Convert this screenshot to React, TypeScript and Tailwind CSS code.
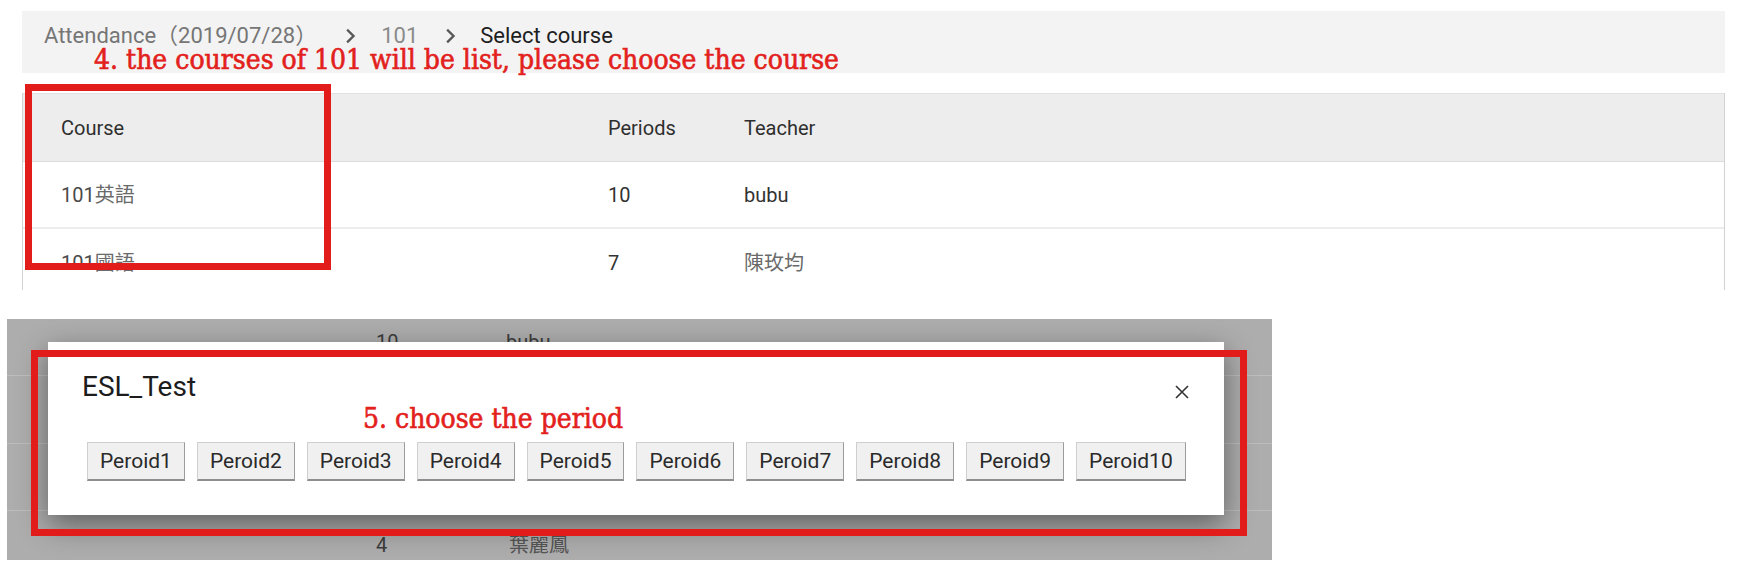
import React from "react";

const UI = { fontFamily: 'Roboto, "Noto Sans CJK TC", "Liberation Sans", sans-serif' };
const RED = { fontFamily: '"DejaVu Serif Condensed", "DejaVu Serif", "Liberation Serif", serif' };

function Chevron() {
  return (
    <svg width="22" height="22" viewBox="2 2 22 22" className="shrink-0">
      <path d="M10 7.5L15.5 13L10 18.5" fill="none" stroke="#585858" strokeWidth="2.4" strokeLinecap="square" />
    </svg>
  );
}

export default function App() {
  const periods = Array.from({ length: 10 }, (_, i) => `Peroid${i + 1}`);
  return (
    <div className="relative w-[1743px] h-[567px] bg-white overflow-hidden" style={UI}>
      {/* Top section */}
      <div className="relative ml-[22px] w-[1703px] pt-[11px]">
        <div className="h-[62px] bg-[#f3f3f3] pt-[14px] pl-[22px]">
          <div className="flex items-center h-[22px] text-[22px] leading-[22px]">
            <span className="text-[#767676]">Attendance（2019/07/28）</span>
            <span className="ml-[23px]"><Chevron /></span>
            <span className="ml-[19px] text-[#8a8a8a]">101</span>
            <span className="ml-[22px]"><Chevron /></span>
            <span className="ml-[18px] text-[#1e1e1e]">Select course</span>
          </div>
        </div>
        <div className="mt-[20px] h-[197px] overflow-hidden border-l border-r border-[#d2d2d2] text-[20px]">
          <div className="flex items-center h-[69px] bg-[#eeeded] border-t border-[#e2e2e2] border-b border-b-[#dcdcdc] text-[#2f2f2f]">
            <div className="w-[585px] pl-[38px]">Course</div>
            <div className="w-[136px]">Periods</div>
            <div>Teacher</div>
          </div>
          <div className="flex items-center h-[67px] border-b-2 border-[#ececec] text-[#4a4a4a]">
            <div className="w-[585px] pl-[38px]">101<span className="text-[#6a6a6a]">英語</span></div>
            <div className="w-[136px] text-[#333]">10</div>
            <div className="text-[#333]">bubu</div>
          </div>
          <div className="flex items-center h-[67px] text-[#4a4a4a]">
            <div className="w-[585px] pl-[38px]">101<span className="text-[#6a6a6a]">國語</span></div>
            <div className="w-[136px] text-[#333]">7</div>
            <div className="text-[#6a6a6a]">陳玫均</div>
          </div>
        </div>
        <div
          className="absolute left-[72px] top-[48px] text-[28px] leading-[24px] text-[#e3211c] whitespace-nowrap [-webkit-text-stroke:0.6px_#e3211c]"
          style={RED}
        >
          4. the courses of 101 will be list, please choose the course
        </div>
        <div className="absolute left-[3px] top-[84px] w-[306px] h-[186px] border-[7px] border-[#e21b1b]" />
      </div>

      {/* Bottom section */}
      <div className="relative ml-[7px] mt-[29px] w-[1265px] h-[241px] overflow-hidden bg-[#adadad] text-[20px] text-[#3c3c3c]">
        <div className="absolute left-0 right-0 top-[-10px]">
          <div className="flex items-center h-[67px] border-b border-[#bdbdbd]">
            <div className="w-[369px]" />
            <div className="w-[130px]">10</div>
            <div>bubu</div>
          </div>
          <div className="h-[68px] border-b border-[#bdbdbd]" />
          <div className="h-[67px] border-b border-[#bdbdbd]" />
          <div className="flex items-center h-[67px]">
            <div className="w-[369px]" />
            <div className="w-[133px]">4</div>
            <div className="text-[#555]">葉麗鳳</div>
          </div>
        </div>

        <div className="absolute left-[41px] top-[23px] w-[1176px] h-[173px] bg-white shadow-[0_10px_28px_rgba(0,0,0,0.45)]">
          <div className="flex items-start justify-between">
            <div className="ml-[34px] mt-[29px] text-[28px] leading-[32px] text-[#1c1c1c]">ESL_Test</div>
            <svg width="14" height="14" viewBox="0 0 14 14" className="mt-[43px] mr-[35px]">
              <path d="M1 1L13 13M13 1L1 13" stroke="#333" strokeWidth="1.6" />
            </svg>
          </div>
          <div className="flex gap-[12px] ml-[39px] mt-[39px]">
            {periods.map((p) => (
              <button
                key={p}
                className="h-[39px] px-[12px] bg-[#f0f0f0] border border-[#cfcfcf] border-r-[#9c9c9c] border-b-2 border-b-[#8e8e8e] text-[21px] leading-[36px] text-[#2a2a2a]"
              >
                {p}
              </button>
            ))}
          </div>
        </div>

        <div
          className="absolute left-[356px] top-[86px] text-[28px] leading-[28px] text-[#e3211c] whitespace-nowrap [-webkit-text-stroke:0.6px_#e3211c]"
          style={RED}
        >
          5. choose the period
        </div>
        <div className="absolute left-[24px] top-[31px] w-[1216px] h-[186px] border-[7px] border-[#e21b1b]" />
      </div>
    </div>
  );
}
